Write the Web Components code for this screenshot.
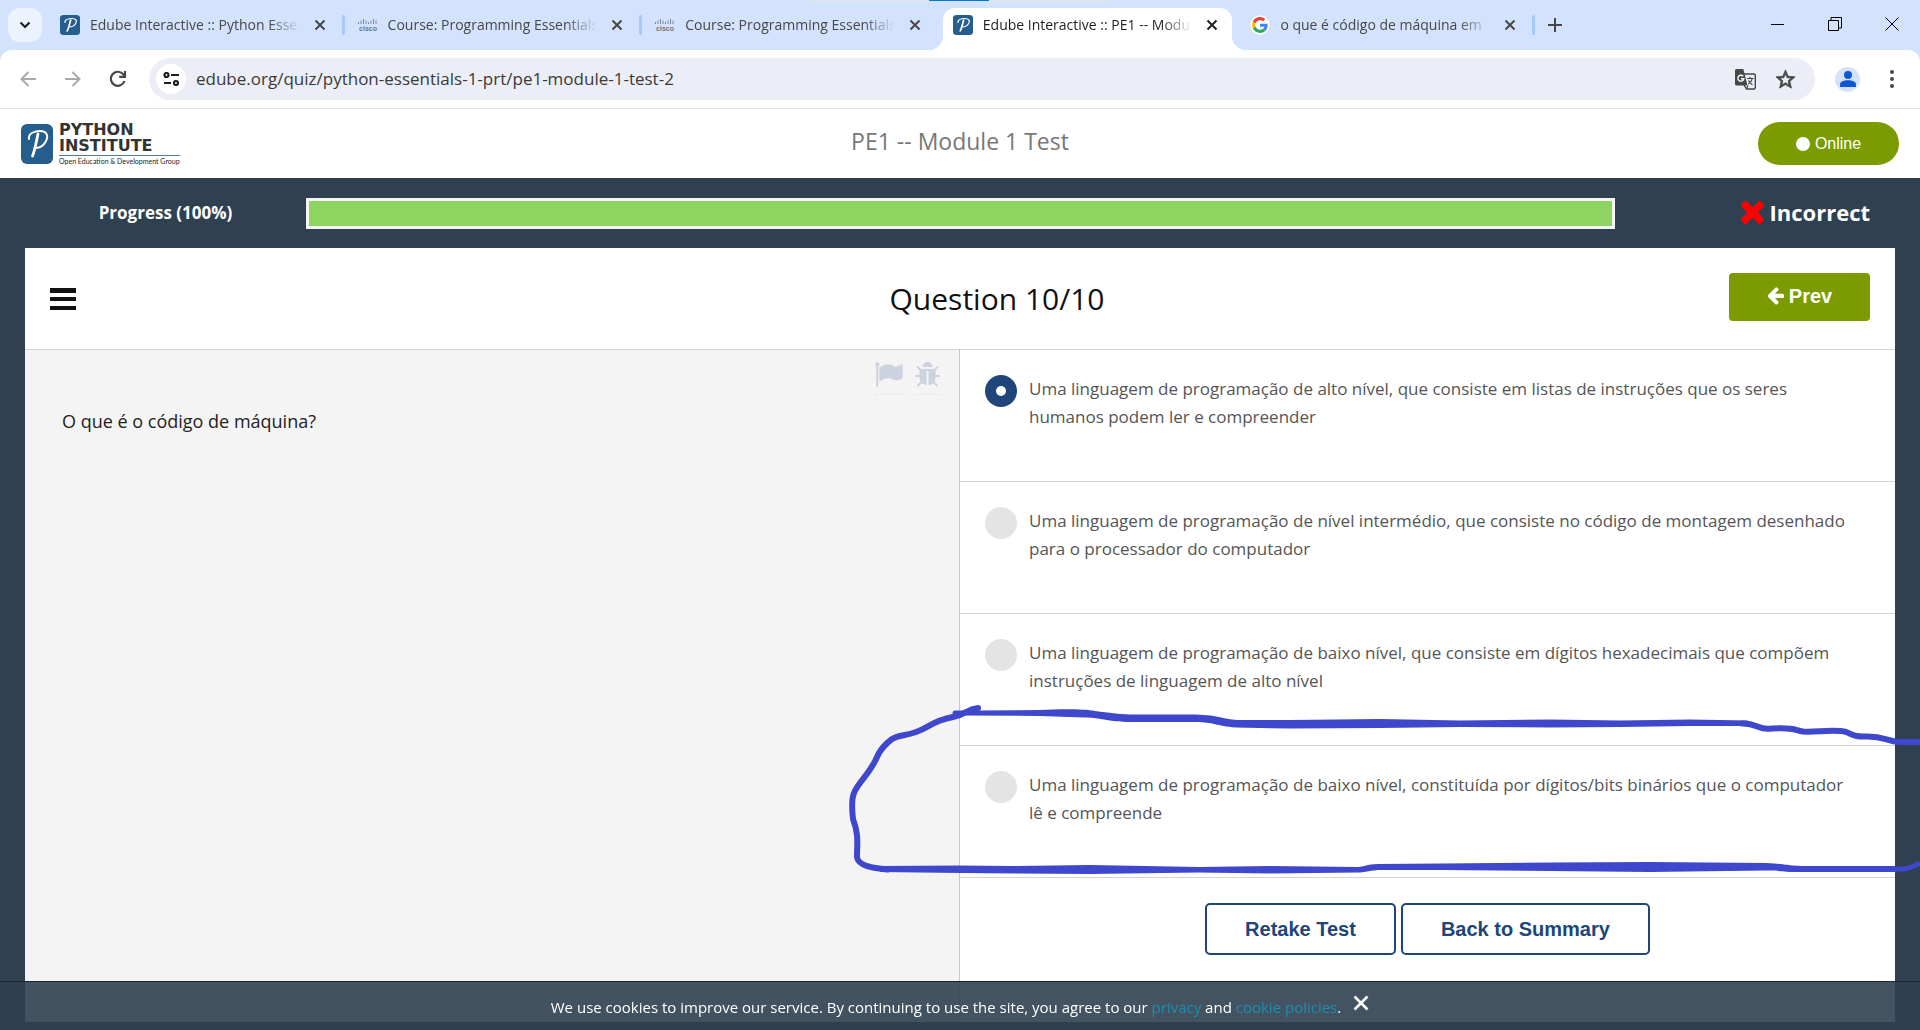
<!DOCTYPE html>
<html lang="en">
<head>
<meta charset="utf-8">
<title>Edube Interactive :: PE1 -- Module 1 Test</title>
<style>
  html, body { margin: 0; }
  body { font-family: "Open Sans", "Noto Sans", sans-serif; position: relative; overflow-x: hidden; }
  edube-page { min-height: 100vh; }
</style>
</head>
<body>
<edube-page></edube-page>
<pen-mark></pen-mark>

<script>
const define = (name, html, setup) => {
  const template = document.createElement('template');
  template.innerHTML = html;
  customElements.define(name, class extends HTMLElement {
    constructor() {
      super();
      this.attachShadow({ mode: 'open' }).append(template.content.cloneNode(true));
    }
    connectedCallback() { if (setup) setup(this, this.shadowRoot); }
  });
};

const reset = `*{box-sizing:border-box} button{font:inherit;color:inherit;background:none;border:0;padding:0;margin:0;cursor:pointer} svg{display:block}`;

/* Python Institute emblem: script P on a blue tile */
define('pi-emblem', `<style>${reset}:host{display:block;flex:none;width:20px;height:20px}svg{width:100%;height:100%}</style>
<svg viewBox="0 0 32 40" preserveAspectRatio="none"><rect width="32" height="40" rx="6" fill="#255e8c"/>
<g fill="none" stroke="#fff" stroke-linecap="round" stroke-linejoin="round"><path d="M17 10C15 19 14 26 11.500 32" stroke-width="2.800"/><path d="M8 15C7 9 14 7 19 7C25 7 28 11 25 17C23 21 19 24 15 24" stroke-width="2"/></g></svg>`);

define('cisco-mark', `<style>${reset}:host{display:block;flex:none;width:20px;height:20px}</style>
<svg width="20" height="20" viewBox="0 0 20 20"><g stroke="#7d8798" stroke-width="1"><path d="M.5 7v2M3 5.500v3.500M5.500 4v5M8 5.500v3.500M10.500 7v2M13 5.500v3.500M15.500 4v5M18 5.500v3.500"/></g>
<text x="10" y="15.500" text-anchor="middle" font-family="Liberation Sans" font-weight="bold" font-size="7" fill="#6d7480">cisco</text></svg>`);

define('google-mark', `<style>${reset}:host{display:block;flex:none;width:20px;height:20px}</style>
<svg width="20" height="20" viewBox="-6 -6 60 60"><circle cx="24" cy="24" r="29" fill="#fff"/>
<path fill="#EA4335" d="M24 9.500c3.540 0 6.710 1.220 9.210 3.600l6.850-6.850C35.900 2.380 30.470 0 24 0 14.620 0 6.510 5.380 2.560 13.220l7.980 6.190C12.430 13.720 17.740 9.500 24 9.500z"/>
<path fill="#4285F4" d="M46.980 24.550c0-1.570-.15-3.090-.38-4.550H24v9.020h12.940c-.58 2.960-2.260 5.480-4.780 7.180l7.730 6c4.510-4.180 7.090-10.360 7.090-17.650z"/>
<path fill="#FBBC05" d="M10.530 28.590c-.48-1.450-.76-2.990-.76-4.590s.27-3.140.76-4.590l-7.980-6.190C.92 16.460 0 20.120 0 24c0 3.880.92 7.540 2.560 10.780l7.970-6.190z"/>
<path fill="#34A853" d="M24 48c6.480 0 11.930-2.130 15.890-5.810l-7.730-6c-2.150 1.450-4.920 2.300-8.160 2.300-6.260 0-11.570-4.220-13.470-9.910l-7.980 6.190C6.510 42.620 14.620 48 24 48z"/></svg>`);

define('browser-tab', `<style>${reset}
:host{display:flex;flex:1;align-items:center;min-width:0;color:#474747}
.tab{flex:1;min-width:0;display:flex;align-items:center;gap:10px;height:42px;padding:0 10px 8px;margin-right:5px;position:relative}
.title{flex:1;min-width:0;overflow:hidden;white-space:nowrap;font-size:14px;line-height:20px;-webkit-mask-image:linear-gradient(90deg,#000 85%,transparent);mask-image:linear-gradient(90deg,#000 85%,transparent)}
.sep{width:3px;height:20px;margin:0 3px 8px -3px;background:#a8c7fa;border-radius:2px}
button{width:20px;height:20px;display:grid;place-items:center}
:host([nosep]) .sep{visibility:hidden}
:host([active]){color:#1f1f1f}
:host([active]) .tab{background:#fff;border-radius:12px 12px 0 0}
:host([active]) .tab::before,:host([active]) .tab::after{content:"";position:absolute;bottom:0;width:14px;height:14px}
:host([active]) .tab::before{right:100%;background:radial-gradient(circle at 0 0,transparent 14px,#fff 14px)}
:host([active]) .tab::after{left:100%;background:radial-gradient(circle at 100% 0,transparent 14px,#fff 14px)}
</style><div class="tab"><slot name="icon"></slot><span class="title"><slot></slot></span>
<button aria-label="Close tab"><svg width="12" height="12" viewBox="0 0 12 12"><path d="M1.500 1.500l9 9M10.500 1.500l-9 9" stroke="currentColor" stroke-width="2"/></svg></button></div><span class="sep"></span>`);

define('browser-frame', `<style>${reset}
:host{display:block;background:#d3e3fd;position:relative}
.load{position:absolute;top:0;left:50%;width:300px;height:1px;margin-left:-151px;background:linear-gradient(90deg,#e5e5e5 40%,#0078d7 40% 60%,#e5e5e5 60%)}
.strip{display:flex;align-items:flex-start;padding:8px 0 0 8px;height:50px}
.search{width:34px;height:34px;border-radius:12px;background:#ecf3fe;display:grid;place-items:center}
.tabs{display:flex;flex:0 1 1488px;min-width:0;margin-left:8px}
.plus{width:34px;height:34px;display:grid;place-items:center}
.wins{margin-left:auto;display:flex}
.wins button{width:57px;height:32px;display:grid;place-items:center}
.bar{display:flex;align-items:center;background:#fff;border-radius:12px 12px 0 0;height:59px;border-bottom:1px solid #dfe1e5;padding:0 13px 0 13px}
.nav{width:29px;height:29px;display:grid;place-items:center;margin-right:16px}
.omni{flex:1;display:flex;align-items:center;height:42px;border-radius:21px;background:#ebeef7;padding:0 15px 0 7px;margin-left:1px}
.site{width:30px;height:30px;border-radius:50%;background:#fff;display:grid;place-items:center}
input{flex:1;min-width:0;border:0;background:none;outline:0;font:17px/24px "Open Sans",sans-serif;color:#3a3a3a;padding:0;margin:0 10px}
.act{width:30px;height:30px;display:grid;place-items:center;margin-left:10px}
.user{width:25px;height:25px;border-radius:50%;background:#d3e3fd;display:grid;place-items:center;margin:0 17px 0 20px}
.menu{width:30px;height:30px;display:grid;place-items:center}
</style>
<div class="load"></div>
<div class="strip">
 <button class="search" aria-label="Search tabs"><svg width="12" height="8" viewBox="0 0 12 8"><path d="M1.500 1.500L6 6l4.500-4.500" fill="none" stroke="#1f1f1f" stroke-width="2.200"/></svg></button>
 <div class="tabs">
  <browser-tab><pi-emblem slot="icon"></pi-emblem>Edube Interactive :: Python Esse</browser-tab>
  <browser-tab><cisco-mark slot="icon"></cisco-mark>Course: Programming Essentials</browser-tab>
  <browser-tab nosep><cisco-mark slot="icon"></cisco-mark>Course: Programming Essentials</browser-tab>
  <browser-tab active nosep><pi-emblem slot="icon"></pi-emblem>Edube Interactive :: PE1 -- Modu</browser-tab>
  <browser-tab><google-mark slot="icon"></google-mark>o que é código de máquina em</browser-tab>
 </div>
 <button class="plus" aria-label="New tab"><svg width="14" height="14" viewBox="0 0 14 14"><path d="M7 0v14M0 7h14" stroke="#474747" stroke-width="2"/></svg></button>
 <div class="wins">
  <button aria-label="Minimize"><svg width="13" height="13"><path d="M0 6.500h13" stroke="#000"/></svg></button>
  <button aria-label="Restore"><svg width="14" height="14" fill="none" stroke="#000"><path d="M.5 3.500h10v10H.5zM3 3V.5h10.500V11H11"/></svg></button>
  <button aria-label="Close"><svg width="14" height="14"><path d="M.5.5l13 13M13.500.5l-13 13" stroke="#000"/></svg></button>
 </div>
</div>
<div class="bar">
 <button class="nav" aria-label="Back"><svg width="16" height="16" viewBox="0 0 16 16" fill="none" stroke="#a9a9a9" stroke-width="2"><path d="M16 8H2M8.500 1L1.500 8l7 7"/></svg></button>
 <button class="nav" aria-label="Forward"><svg width="16" height="16" viewBox="0 0 16 16" fill="none" stroke="#a9a9a9" stroke-width="2"><path d="M0 8h14M7.500 1l7 7-7 7"/></svg></button>
 <button class="nav" aria-label="Reload"><svg width="18" height="18" viewBox="0 0 18 18" fill="none" stroke="#474747" stroke-width="2.200"><path d="M15.500 11A7 7 0 1 1 14 4l2 2.300"/><path d="M16 1v5.800h-5.800"/></svg></button>
 <div class="omni">
  <button class="site" aria-label="Site information"><svg width="17" height="14" viewBox="0 0 17 14" fill="none" stroke="#1f1f1f" stroke-width="2.200"><circle cx="3.500" cy="3" r="2"/><path d="M8 3h8M1 11h7"/><circle cx="13" cy="11" r="2"/></svg></button>
  <input type="text" aria-label="Address" value="edube.org/quiz/python-essentials-1-prt/pe1-module-1-test-2">
  <button class="act" aria-label="Translate this page"><svg width="21" height="21" viewBox="0 0 21 21"><path d="M9 5h10a1.300 1.300 0 0 1 1.300 1.300v12.400A1.300 1.300 0 0 1 19 20h-7.500L8 14z" fill="#ebeef7" stroke="#474747" stroke-width="1.400"/><path d="M1.500 0h6.800l4.200 16.500h-11A1.500 1.500 0 0 1 0 15V1.500A1.500 1.500 0 0 1 1.500 0z" fill="#474747"/><path d="M8.200 7.300a3 3 0 1 0 .6 2.500H6" fill="none" stroke="#fff" stroke-width="1.400"/><path d="M12 9.500h6.500M15 8v1.500M17.300 9.500c-.5 2.500-2 4.300-4 5.500M13.500 11.500c1 2 2.500 3.500 4 4.500M11.500 20l1.500-3.500" fill="none" stroke="#474747" stroke-width="1.200"/></svg></button>
  <button class="act" aria-label="Bookmark this tab"><svg width="23" height="23" viewBox="0 0 24 24"><path d="M22 9.240l-7.190-.62L12 2 9.190 8.630 2 9.240l5.460 4.730L5.820 21 12 17.270 18.180 21l-1.630-7.030L22 9.240zM12 15.400l-3.760 2.270 1-4.280-3.320-2.880 4.380-.38L12 6.100l1.710 4.040 4.380.38-3.320 2.880 1 4.280L12 15.400z" fill="#474747" stroke="#474747" stroke-width=".8"/></svg></button>
 </div>
 <button class="user" aria-label="Profile"><svg width="16" height="16" viewBox="0 0 16 16" fill="#0b57d0"><circle cx="8" cy="4" r="4"/><path d="M0 16v-2.500C0 10.500 4 9.300 8 9.300s8 1.200 8 4.200V16z"/></svg></button>
 <button class="menu" aria-label="Menu"><svg width="4" height="18" viewBox="0 0 4 18" fill="#474747"><circle cx="2" cy="2" r="2"/><circle cx="2" cy="9" r="2"/><circle cx="2" cy="16" r="2"/></svg></button>
</div>`);

define('site-header', `<style>${reset}
:host{display:grid;grid-template-columns:1fr auto 1fr;align-items:center;height:69px;padding:0 21px;background:#fff}
.logo{display:flex;align-items:center;gap:6px;color:#333;text-decoration:none}
.logo pi-emblem{width:32px;height:40px}
.name{display:flex;flex-direction:column;font:bold 16px/16px "DejaVu Sans",sans-serif}
.tag{font:7px/9px Lato,sans-serif;border-top:1px solid #4d7fa5;margin-top:1px;padding-top:1px;color:#222}
h1{margin:0;font-weight:400;font-size:23px;line-height:32px;color:#777;padding-bottom:6px}
button{justify-self:end;width:141px;height:43px;border-radius:22px;background:#7b9b00;color:#fff;font:16px/20px "Liberation Sans",Arial,sans-serif;display:flex;align-items:center;justify-content:center;gap:5px}
i{width:14px;height:14px;border-radius:50%;background:#fff}
</style>
<a class="logo" href="#"><pi-emblem></pi-emblem><span class="name"><span>PYTHON</span><span>INSTITUTE</span><span class="tag">Open Education &amp; Development Group</span></span></a>
<h1>PE1 -- Module 1 Test</h1>
<button><i></i>Online</button>`);

define('progress-strip', `<style>${reset}
:host{display:grid;grid-template-columns:281px 1fr 255px;align-items:center;height:70px;color:#fff;font-weight:700;padding-right:25px}
.label{text-align:center;font-size:17px;line-height:24px}
.track{height:31px;border:3px solid #f5f5f5;background:#f5f5f5}
.fill{height:100%;width:100%;background:#8dd460}
.result{display:flex;align-items:center;justify-content:flex-end;gap:5px;font-size:22px;line-height:30px;padding-bottom:2px}
</style>
<span class="label" id="p">Progress (100%)</span>
<div class="track" role="progressbar" aria-labelledby="p" aria-valuenow="100"><div class="fill"></div></div>
<span class="result"><svg width="23" height="23" viewBox="302 366 1188 1188" fill="#f00"><path d="M1490 1322q0 40-28 68l-136 136q-28 28-68 28t-68-28l-294-294-294 294q-28 28-68 28t-68-28l-136-136q-28-28-28-68t28-68l294-294-294-294q-28-28-28-68t28-68l136-136q28-28 68-28t68 28l294 294 294-294q28-28 68-28t68 28l136 136q28 28 28 68t-28 68l-294 294 294 294q28 28 28 68z"/></svg>Incorrect</span>`);

define('question-head', `<style>${reset}
:host{display:grid;grid-template-columns:215px 1fr 141px;align-items:center;height:102px;padding:0 25px;border-bottom:1px solid #d3d5d8}
h2{margin:0;text-align:center;font-weight:400;font-size:30px;line-height:40px;color:#111}
.prev{height:48px;border-radius:4px;background:#7b9b00;color:#fff;font:bold 20px/24px "Liberation Sans",Arial,sans-serif;display:flex;align-items:center;justify-content:center;gap:5px;margin-bottom:4px;padding-bottom:2px}
.menu{justify-self:start}
</style>
<button class="menu" aria-label="Questions"><svg width="26" height="22" viewBox="0 0 26 22" fill="#111"><path d="M0 0h26v5H0zM0 9h26v4H0zM0 18h26v4H0z"/></svg></button>
<h2><slot></slot></h2>
<button class="prev"><svg width="17" height="18" viewBox="0 -40 1536 1490" fill="#fff"><path d="M1536 640v128q0 53-32.500 90.500t-84.500 37.500h-704l293 294q38 36 38 90t-38 90l-75 76q-37 37-90 37-52 0-91-37l-651-652q-37-37-37-90 0-52 37-91l651-650q38-38 91-38 52 0 90 38l75 74q38 38 38 91t-38 91l-293 293h704q52 0 84.500 37.500t32.500 90.500z"/></svg>Prev</button>`);

define('question-text', `<style>${reset}
:host{display:block;background:#f4f4f4;border-right:1px solid #c8c8c8;color:#222;font-size:18px;line-height:28px}
.tools{display:flex;justify-content:flex-end;gap:12px;padding:12px 19px 0 0;color:#ccd3de}
.tools button{border-bottom:1px dotted #e2e2e2;height:33px}
.tools button svg{margin-bottom:8px}
p{margin:12px 37px 0}
</style>
<div class="tools">
<button aria-label="Flag question"><svg width="28" height="25" viewBox="64 110 1728 1570" fill="currentColor"><path d="M320 256q0 72-64 110v1266q0 13-9.500 22.500t-22.500 9.500h-64q-13 0-22.500-9.500t-9.500-22.500v-1266q-64-38-64-110 0-53 37.500-90.500t90.500-37.500 90.500 37.500 37.500 90.500zm1472 64v763q0 25-12.500 38.500t-39.500 27.500q-215 116-369 116-61 0-123.500-22t-108.500-48-115.500-48-142.500-22q-192 0-464 146-17 9-33 9-26 0-45-19t-19-45v-742q0-32 31-55 21-14 79-43 236-120 421-120 107 0 200 29t219 88q38 19 88 19 54 0 117.500-21t110-47 88-47 54.500-21q26 0 45 19t19 45z"/></svg></button>
<button aria-label="Report a bug"><svg width="25" height="25" viewBox="96 64 1600 1600" fill="currentColor"><path d="M1696 960q0 26-19 45t-45 19h-224q0 171-67 290l208 209q19 19 19 45t-19 45q-18 19-45 19t-45-19l-198-197q-5 5-15 13t-42 28.500-65 36.500-82 29-97 13v-896h-128v896q-51 0-101.500-13.500t-87-33-66-39-43.500-32.500l-15-14-183 207q-20 21-48 21-24 0-43-16-19-18-20.500-44.500t15.500-46.500l202-227q-58-114-58-274h-224q-26 0-45-19t-19-45 19-45 45-19h224v-294l-173-173q-19-19-19-45t19-45 45-19 45 19l173 173h844l173-173q19-19 45-19t45 19 19 45-19 45l-173 173v294h224q26 0 45 19t19 45zm-480-576h-640q0-133 93.500-226.500t226.500-93.500 226.500 93.500 93.500 226.500z"/></svg></button>
</div><p><slot></slot></p>`);

define('answer-option', `<style>${reset}
:host{display:block;border-bottom:1px solid #d3d3d3}
label{display:flex;gap:12px;padding:25px 40px 50px 25px;font-size:17px;line-height:28px;color:#555;cursor:pointer}
input{appearance:none;-webkit-appearance:none;flex:none;width:32px;height:32px;border-radius:50%;background:#e4e4e4;margin:0;display:grid;place-items:center}
input:checked{background:#20457a}
input:checked::before{content:"";width:10px;height:10px;border-radius:50%;background:#fff}
</style><label><input type="radio"><span><slot></slot></span></label>`,
(host, root) => { root.querySelector('input').checked = host.hasAttribute('checked'); });

define('outline-button', `<style>${reset}
:host{display:block}
button{height:52px;padding:0 38px;border:2px solid #20457a;border-radius:5px;background:#fff;color:#20457a;font:bold 20px/24px "Liberation Sans",Arial,sans-serif}
</style><button><slot></slot></button>`);

define('cookie-bar', `<style>${reset}
:host{display:flex;justify-content:center;align-items:flex-start;gap:12px;position:fixed;left:0;right:0;bottom:0;height:49px;border-top:1px solid #1b242c;background:rgba(47,64,80,.9);color:#fff;font-size:15px;line-height:24px;font-weight:500;padding-top:13px}
a{color:#1f8fb0;text-decoration:none;font-weight:400}
button{width:16px;height:16px}
</style><span>We use cookies to improve our service. By continuing to use the site, you agree to our <a href="#">privacy</a> and <a href="#">cookie policies</a>.</span>
<button aria-label="Dismiss"><svg width="16" height="16" viewBox="0 0 16 16"><path d="M1.500 1.500l13 13M14.500 1.500l-13 13" stroke="#fff" stroke-width="2.600"/></svg></button>`);

define('edube-page', `<style>${reset}
:host{display:flex;flex-direction:column}
.quiz{flex:1;display:flex;flex-direction:column;background:#2f4050;padding:0 25px 8px}
progress-strip{flex:none}
.card{flex:1;display:flex;flex-direction:column;background:#fff}
.cols{flex:1;display:grid;grid-template-columns:1fr 1fr}
.done{display:flex;justify-content:center;gap:5px;padding:25px 0 60px}
</style>
<browser-frame></browser-frame>
<site-header></site-header>
<main class="quiz">
 <progress-strip></progress-strip>
 <section class="card">
  <question-head>Question 10/10</question-head>
  <div class="cols">
   <question-text>O que é o código de máquina?</question-text>
   <div>
    <answer-option checked>Uma linguagem de programação de alto nível, que consiste em listas de instruções que os seres humanos podem ler e compreender</answer-option>
    <answer-option>Uma linguagem de programação de nível intermédio, que consiste no código de montagem desenhado para o processador do computador</answer-option>
    <answer-option>Uma linguagem de programação de baixo nível, que consiste em dígitos hexadecimais que compõem instruções de linguagem de alto nível</answer-option>
    <answer-option>Uma linguagem de programação de baixo nível, constituída por dígitos/bits binários que o computador lê e compreende</answer-option>
    <div class="done"><outline-button>Retake Test</outline-button><outline-button>Back to Summary</outline-button></div>
   </div>
  </div>
 </section>
</main>
<cookie-bar></cookie-bar>`);

/* Freehand pen loop drawn over the last answer */
define('pen-mark', `<style>${reset}:host{position:absolute;left:0;top:0;pointer-events:none}</style>
<svg width="1920" height="900" fill="none" stroke="#3f48cc" stroke-linecap="round" stroke-linejoin="round">
<path stroke="none" fill="#3f48cc" d="M955 710.500H975L1040 710C1060 709 1085 709 1095 711C1110 713 1118 714 1130 714.500H1195C1220 715 1225 720 1240 720H1290L1380 719L1460 720.500L1550 719.500L1620 720.500L1690 719.500L1748 720.500V726H1690L1620 727L1550 727.500L1460 727L1380 728L1290 728.500L1236 727.500C1215 726 1215 722 1195 722H1130C1108 722 1105 718 1084 717.500L1040 716L955 715.500A2.500 2.500 0 0 1 955 710.500z"/>
<path stroke-width="6" d="M1742 723.500C1758 723 1758 731 1772 728.500C1795 727 1794 730 1803 731.500C1815 732.500 1835 729 1846 732C1854 735 1855 737 1866 736.500C1884 736 1886 741 1900 742H1922"/>
<path stroke-width="6" d="M978 708C966 709 966 715 953 717C932 721 930 727 916 732C905 736 899 735 892 739C884 745 880 750 877 757C870 774 858 782 854 793C851 800 852 810 853 819C859 835 857 843 857 857C858 866 873 868 888 869.500"/>
<path stroke="none" fill="#3f48cc" d="M880 866L960 865.500L1010 866L1090 865L1199 867L1270 866L1358 867C1364 867 1367 864 1378 864L1440 863.500L1550 862.500L1650 862L1766 863C1785 863.500 1785 866 1810 866H1895V872H1810C1780 872.500 1785 870.500 1766 870.500L1650 872L1550 871L1440 870L1382 870C1370 870 1366 872.500 1358 872.500L1270 873.500L1199 872.500L1090 874L960 873L880 872z"/>
<path stroke-width="5" d="M1893 869C1908 870 1912 867 1918 864"/>
</svg>`);
</script>
</body>
</html>
